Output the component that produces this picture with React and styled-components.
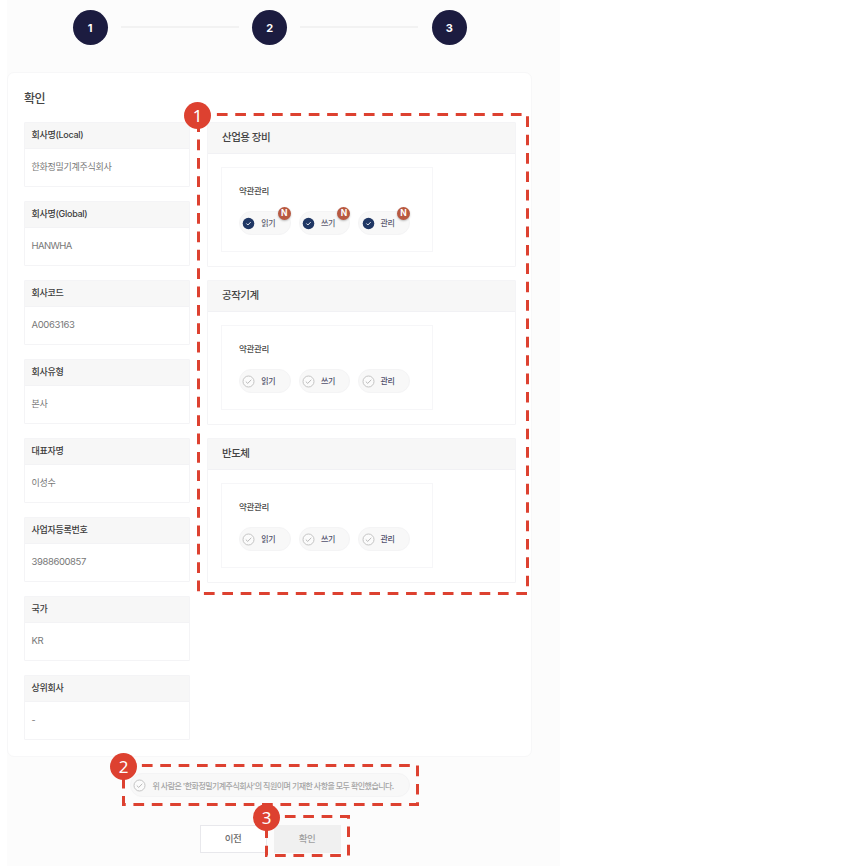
import React from "react";
import styled, { createGlobalStyle, css } from "styled-components";

const GlobalStyle = createGlobalStyle`
  *, *::before, *::after { box-sizing: border-box; }
  body {
    margin: 0;
    background: #fff;
    font-family: Inter, "Noto Sans CJK KR", sans-serif;
    color: #444;
  }
`;

const Page = styled.div`
  position: relative;
  width: 847px;
  height: 866px;
  overflow: hidden;
`;

const Sheet = styled.main`
  width: 553px;
  height: 866px;
  margin-left: 7px;
  background: #fcfcfc;
  display: flex;
  flex-direction: column;
`;

const Steps = styled.ol`
  list-style: none;
  margin: 0;
  padding: 9.5px 0 0 65.5px;
  height: 72px;
  display: flex;
  align-items: flex-start;
`;

const Step = styled.li`
  display: flex;
  align-items: center;
  height: 35px;
`;

const StepCircle = styled.span`
  width: 35px;
  height: 35px;
  border-radius: 50%;
  background: #1c1c40;
  color: #fff;
  font-size: 11px;
  font-weight: 700;
  display: flex;
  align-items: center;
  justify-content: center;
  padding-top: 2px;
`;

const StepLine = styled.span`
  width: 118px;
  height: 2px;
  margin: 0 13.3px;
  background: #f2f2f2;
`;

const Card = styled.section`
  width: 525px;
  height: 685px;
  border: 1px solid #f7f7f8;
  border-radius: 7px;
  background: #fff;
  padding: 16px 15px 0 16px;
`;

const Title = styled.h1`
  margin: 0 0 14px;
  height: 19px;
  line-height: 19px;
  font-size: 12px;
  font-weight: 500;
  letter-spacing: -0.6px;
  color: #444;
`;

const Columns = styled.div`
  display: grid;
  grid-template-columns: 166px 309px;
  column-gap: 17px;
  align-items: start;
`;

const Stack = styled.div`
  display: flex;
  flex-direction: column;
  gap: ${(p) => p.$gap}px;
`;

const Panel = styled.div`
  border: 1px solid #f4f4f6;
  border-radius: 1px;
  height: ${(p) => p.$height}px;
`;

const FieldLabel = styled.div`
  height: 26px;
  line-height: 24px;
  padding-left: 6.5px;
  background: #f7f7f7;
  border-bottom: 1px solid #f3f3f5;
  font-size: 9px;
  font-weight: 500;
  letter-spacing: -0.28px;
  color: #3c3c3c;
`;

const FieldValue = styled.div`
  height: 38px;
  line-height: 36px;
  padding-left: 6.5px;
  font-size: ${(p) => (p.$spacing === undefined ? 9 : 9.5)}px;
  letter-spacing: ${(p) => p.$spacing ?? -0.28}px;
  color: #777;
`;

const GroupHead = styled.div`
  height: 31px;
  line-height: 30px;
  padding-left: 14px;
  background: #f7f7f7;
  border-bottom: 1px solid #f1f1f4;
  font-size: 10.5px;
  font-weight: 500;
  letter-spacing: -0.5px;
  color: #444;
`;

const Permission = styled.div`
  width: 212px;
  height: 85px;
  margin: 13px 0 0 13px;
  border: 1px solid #f6f6f8;
  padding: 15px 0 0 17px;
`;

const PermissionName = styled.div`
  height: 16px;
  line-height: 16px;
  margin-bottom: 12px;
  font-size: 8.5px;
  font-weight: 500;
  letter-spacing: -0.35px;
  color: #4c4c4c;
`;

const PillRow = styled.div`
  display: flex;
  gap: 8px;
`;

const pill = css`
  display: flex;
  align-items: center;
  height: 24px;
  border: 1px solid #f4f4f5;
  border-radius: 12px;
  background: #f8f8f8;
`;

const Pill = styled.div`
  ${pill}
  position: relative;
  width: 51.7px;
  padding-left: 2.2px;
  gap: 6px;
  font-size: 8px;
  font-weight: 500;
  letter-spacing: -0.35px;
  line-height: 22px;
  color: ${(p) => (p.$on ? "#5c5c70" : "#50506c")};
`;

const NewBadge = styled.span`
  position: absolute;
  top: -5px;
  right: -1px;
  width: 13px;
  height: 13px;
  border-radius: 50%;
  background: #b85840;
  box-shadow: 0 1px 2px rgba(0, 0, 0, 0.25);
  color: #fff;
  font-size: 8.5px;
  font-weight: 700;
  letter-spacing: 0;
  line-height: 13px;
  text-align: center;
`;

const Agreement = styled.div`
  ${pill}
  width: 280px;
  margin: 16px 0 0 122.5px;
  padding-left: 2.5px;
  gap: 6.5px;
  font-size: 8px;
  font-weight: 500;
  letter-spacing: -0.56px;
  color: #a4a4a4;
  white-space: nowrap;
`;

const Actions = styled.div`
  display: flex;
  gap: 7px;
  margin: 27.5px 0 0 192.5px;
`;

const Button = styled.button`
  width: 67px;
  height: 28px;
  padding: 0 0 2px;
  border: 1px solid ${(p) => (p.disabled ? "#f0f0f0" : "#e8e8ec")};
  background: ${(p) => (p.disabled ? "#f0f0f0" : "#fff")};
  color: ${(p) => (p.disabled ? "#a0a0a0" : "#6c6c6c")};
  font-family: inherit;
  font-size: 9.5px;
  font-weight: 500;
  letter-spacing: -0.5px;
`;

const Icon = styled.svg`
  flex: none;
  display: block;
`;

const Overlay = styled.svg`
  position: absolute;
  inset: 0;
  pointer-events: none;
`;

const Marker = styled.span`
  position: absolute;
  left: ${(p) => p.$x}px;
  top: ${(p) => p.$y}px;
  width: 27px;
  height: 27px;
  border-radius: 50%;
  background: #dd4130;
  color: #fff;
  font-family: "Noto Sans", sans-serif;
  font-size: 17px;
  line-height: 27px;
  text-align: center;
`;

function Check({ on }) {
  return (
    <Icon width="13" height="13" viewBox="0 0 13 13" fill="none">
      <circle
        cx="6.5"
        cy="6.5"
        r={on ? 5.8 : 5.5}
        fill={on ? "#203764" : "#fbfbfb"}
        stroke={on ? "none" : "#c4c4c4"}
      />
      <path
        d={on ? "M4.4 6.5l1.5 1.5 2.8-2.9" : "M3.8 6.6l1.9 1.8 3.6-3.6"}
        stroke={on ? "#e4e9f2" : "#b9b9b9"}
        strokeWidth="1"
      />
    </Icon>
  );
}

const fields = [
  { label: "회사명(Local)", value: "한화정밀기계주식회사" },
  { label: "회사명(Global)", value: "HANWHA", spacing: -0.6 },
  { label: "회사코드", value: "A0063163", spacing: -0.35 },
  { label: "회사유형", value: "본사" },
  { label: "대표자명", value: "이성수" },
  { label: "사업자등록번호", value: "3988600857", spacing: -0.4 },
  { label: "국가", value: "KR", spacing: -0.4 },
  { label: "상위회사", value: "-" },
];

const groups = [
  { name: "산업용 장비", on: true },
  { name: "공작기계", on: false },
  { name: "반도체", on: false },
];

const areas = [
  { id: 1, x: 198.5, y: 114.5, w: 329, h: 479, mx: 184, my: 102 },
  { id: 2, x: 123.5, y: 765.5, w: 294, h: 39, mx: 110, my: 753 },
  { id: 3, x: 266.5, y: 816.5, w: 82, h: 39, mx: 253, my: 804 },
];

export default function App() {
  return (
    <Page lang="ko">
      <GlobalStyle />
      <Sheet>
        <Steps>
          {[1, 2, 3].map((n) => (
            <Step key={n}>
              {n > 1 && <StepLine />}
              <StepCircle>{n}</StepCircle>
            </Step>
          ))}
        </Steps>
        <Card>
          <Title>확인</Title>
          <Columns>
            <Stack $gap={14}>
              {fields.map((field) => (
                <Panel key={field.label} $height={65.05}>
                  <FieldLabel>{field.label}</FieldLabel>
                  <FieldValue $spacing={field.spacing}>{field.value}</FieldValue>
                </Panel>
              ))}
            </Stack>
            <Stack $gap={13.5}>
              {groups.map((group) => (
                <Panel key={group.name} $height={144.6}>
                  <GroupHead>{group.name}</GroupHead>
                  <Permission>
                    <PermissionName>약관관리</PermissionName>
                    <PillRow>
                      {["읽기", "쓰기", "관리"].map((name) => (
                        <Pill key={name} $on={group.on}>
                          <Check on={group.on} />
                          {name}
                          {group.on && <NewBadge>N</NewBadge>}
                        </Pill>
                      ))}
                    </PillRow>
                  </Permission>
                </Panel>
              ))}
            </Stack>
          </Columns>
        </Card>
        <Agreement>
          <Check />
          위 사람은 '한화정밀기계주식회사'의 직원이며 기재한 사항을 모두 확인했습니다.
        </Agreement>
        <Actions>
          <Button>이전</Button>
          <Button disabled>확인</Button>
        </Actions>
      </Sheet>
      <Overlay width="847" height="866">
        {areas.map((a) => (
          <path
            key={a.id}
            d={`M${a.x} ${a.y}h${a.w}v${a.h}h${-a.w}z`}
            fill="none"
            stroke="#dd4130"
            strokeWidth="3"
            strokeDasharray="10.7 7.675"
          />
        ))}
      </Overlay>
      {areas.map((a) => (
        <Marker key={a.id} $x={a.mx} $y={a.my}>
          {a.id}
        </Marker>
      ))}
    </Page>
  );
}
